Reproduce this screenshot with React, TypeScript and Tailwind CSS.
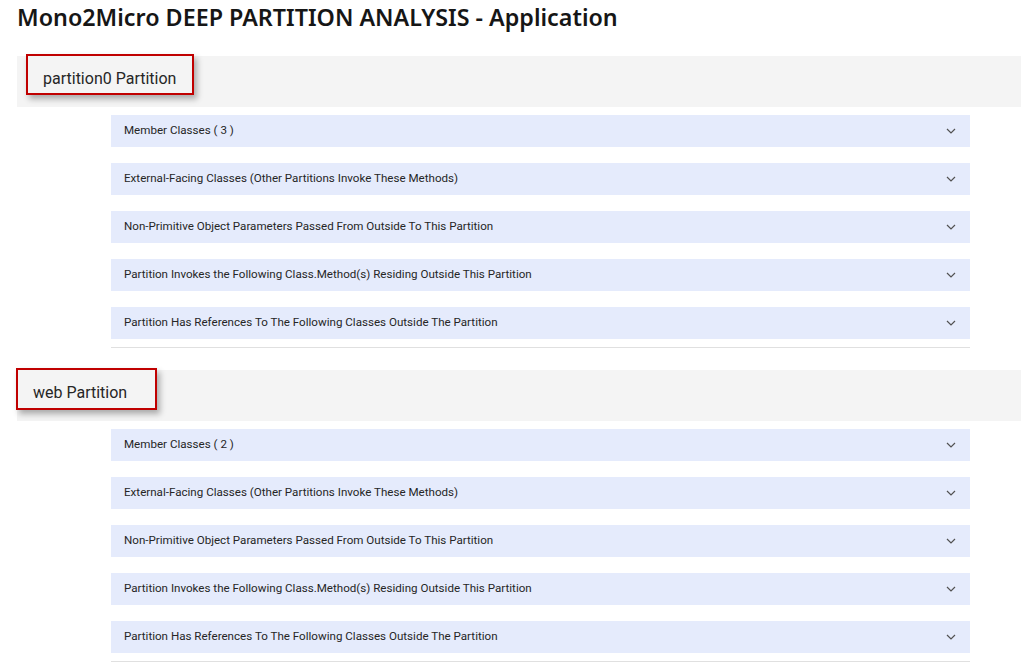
const partitions = [
  { name: 'partition0', count: 3, boxClass: 'ml-[9px] w-[168px] h-[41px]' },
  { name: 'web', count: 2, boxClass: '-ml-[1px] w-[141px] h-[42px]' },
];

const sectionTitles = [
  'External-Facing Classes (Other Partitions Invoke These Methods)',
  'Non-Primitive Object Parameters Passed From Outside To This Partition',
  'Partition Invokes the Following Class.Method(s) Residing Outside This Partition',
  'Partition Has References To The Following Classes Outside The Partition',
];

function Chevron() {
  return (
    <svg width="10" height="6" viewBox="0 0 10 6" fill="none" className="text-[#525252]">
      <polyline points="1,1 5,5 9,1" stroke="currentColor" strokeWidth="1.2" />
    </svg>
  );
}

function AccordionRow({ title }: { title: string }) {
  return (
    <div
      className="flex items-center justify-between h-8 bg-[#e5ebfc] pl-[13px] pr-[14px] text-[11.6px] text-[#262626]"
      style={{ fontFamily: 'Roboto, "Liberation Sans", sans-serif' }}
    >
      <span>{title}</span>
      <Chevron />
    </div>
  );
}

export default function App() {
  return (
    <div className="bg-white min-h-screen text-[#161616]" style={{ fontFamily: '"Noto Sans", "Liberation Sans", sans-serif' }}>
      <h1 className="pl-[17px] pt-[1px] h-[56px] text-[23.3px] font-semibold leading-[32px]">
        Mono2Micro DEEP PARTITION ANALYSIS - Application
      </h1>
      {partitions.map((p, i) => (
        <div key={p.name} className={i > 0 ? 'mt-[22px]' : ''}>
          <div className="ml-[17px] h-[51px] bg-[#f4f4f4] flow-root">
            <div
              className={`${p.boxClass} -mt-[2px] flex items-center pt-[8px] pl-[15px] border-2 border-[#c00000] bg-[#f4f4f4] shadow-[3px_4px_6px_rgba(0,0,0,0.3)] text-[16px] text-[#262626]`}
              style={{ fontFamily: 'Roboto, "Liberation Sans", sans-serif' }}
            >
              {p.name} Partition
            </div>
          </div>
          <div className="ml-[111px] w-[859px] pt-2 flex flex-col gap-4">
            <AccordionRow title={`Member Classes ( ${p.count} )`} />
            {sectionTitles.map((t) => (
              <AccordionRow key={t} title={t} />
            ))}
          </div>
          <div className="ml-[111px] w-[859px] mt-2 h-px bg-[#e0e0e0]" />
        </div>
      ))}
    </div>
  );
}
